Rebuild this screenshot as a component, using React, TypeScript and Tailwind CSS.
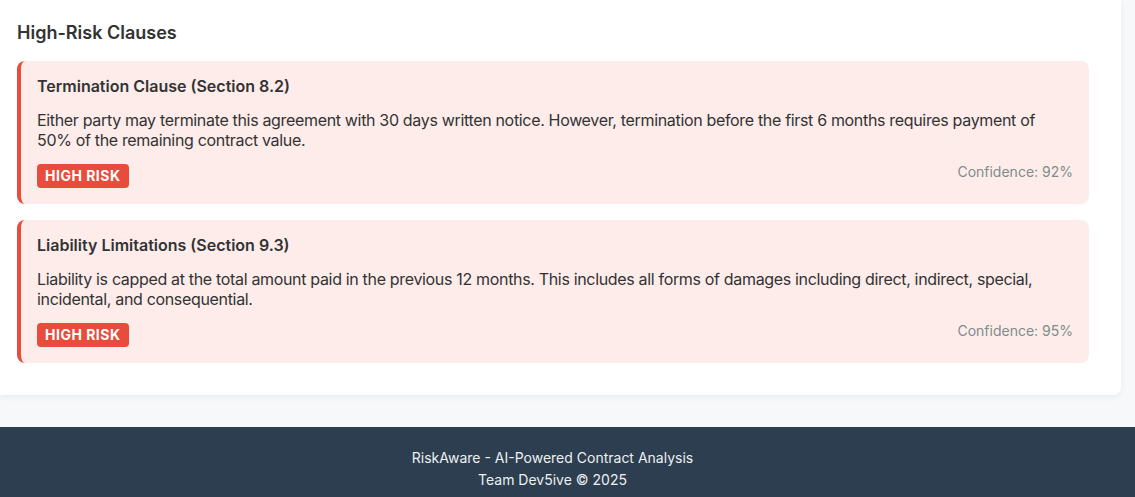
import React from 'react';

const clauses = [{
  id: '1',
  title: 'Termination Clause (Section 8.2)',
  text: 'Either party may terminate this agreement with 30 days written notice. However, termination before the first 6 months requires payment of 50% of the remaining contract value.',
  confidence: 92
}, {
  id: '2',
  title: 'Liability Limitations (Section 9.3)',
  text: 'Liability is capped at the total amount paid in the previous 12 months. This includes all forms of damages including direct, indirect, special, incidental, and consequential.',
  confidence: 95
}];

const App: React.FC = () => {
  return <div className="min-h-[497px] bg-[#f7f8fa] text-[#333] font-['Inter','Liberation_Sans',sans-serif]">
      <div className="pr-[14px]">
        <div className="bg-white rounded-br-lg shadow-[0_2px_6px_rgba(0,0,0,0.06)] pl-[17px] pr-[32px] pt-[22px] pb-[32px]">
          <h3 className="text-[18px] font-semibold leading-[22px] mb-[17px]">High-Risk Clauses</h3>
          <div className="space-y-4">
            {clauses.map(c => <div key={c.id} className="bg-[#fdecea] border-l-4 border-[#e74c3c] rounded-lg px-4 py-4">
                <h4 className="text-[16px] font-semibold leading-[1.21] mb-[15px]">{c.title}</h4>
                <p className="text-[16px] leading-[1.21] mb-[14px] text-[#333] tracking-[-0.33px]">{c.text}</p>
                <div className="flex justify-between">
                  <span className="h-6 px-2 flex items-center rounded bg-[#e74c3c] text-white text-[14px] font-bold leading-none tracking-[0.5px]">
                    HIGH RISK
                  </span>
                  <span className="text-[14px] leading-[1.21] text-[#7f8c8d]">Confidence: {c.confidence}%</span>
                </div>
              </div>)}
          </div>
        </div>
      </div>
      <footer className="mt-8 bg-[#2c3e50] text-[#ecf0f1] text-[14px] text-center pt-[20px] pb-[9px] pr-[30px] leading-[22px]">
        <p>RiskAware - AI-Powered Contract Analysis</p>
        <p>Team Dev5ive © 2025</p>
      </footer>
    </div>;
};
export default App;
